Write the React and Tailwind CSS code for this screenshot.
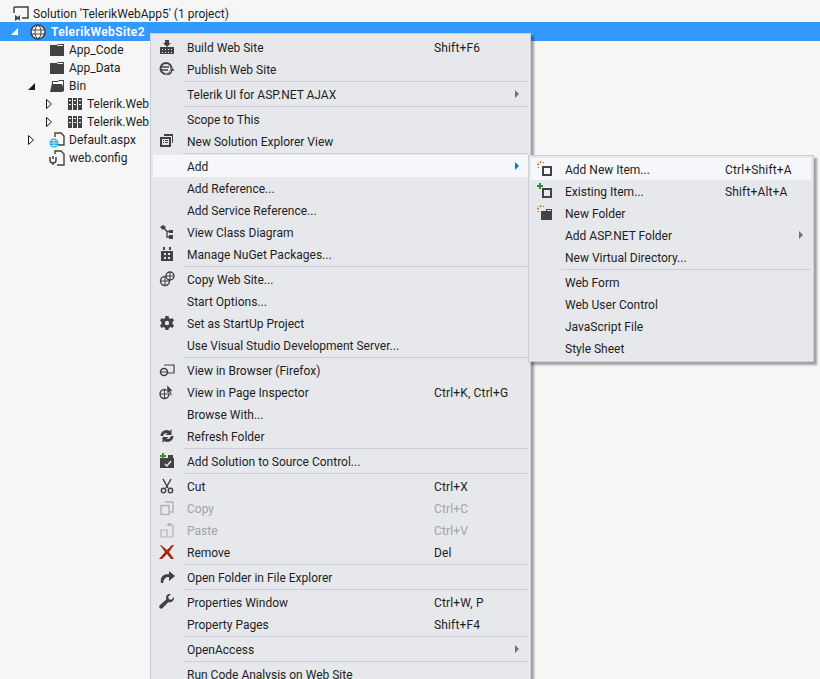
import React from 'react';

const Ic = ({ children, className = '' }) => (
  <svg width="16" height="16" viewBox="0 0 16 16" className={`shrink-0 ${className}`}>{children}</svg>
);

const dark = '#424242';
const bg = '#e7e8ec';

const icons = {
  build: <Ic><path d="M1 8h14v7H1z" fill={dark} /><path d="M6 1h4v3h2l-4 4-4-4h2z" fill={dark} /><path d="M3 10h1v1H3zM6 10h1v1H6zM9 10h1v1H9zM12 10h1v1h-1zM3 13h1v1H3zM6 13h1v1H6zM9 13h1v1H9zM12 13h1v1h-1z" fill={bg} /></Ic>,
  publish: <Ic><circle cx="7" cy="7.500" r="5.500" fill="none" stroke={dark} strokeWidth="2" /><path d="M2 6h8M2 9h7" stroke={dark} strokeWidth="1.300" /><path d="M7 14c3.500 1 6-1 6.500-4H16l-2.500-3.500L10 10h1.800c-.5 1.500-2.300 2.300-4.800 2z" fill={dark} stroke={bg} strokeWidth=".6" /></Ic>,
  newView: <Ic><path d="M5 1h9v9h-1V3H5z" fill={dark} /><path d="M1 4h11v10H1z" fill={dark} /><path d="M3 6h7v6H3z" fill={bg} /><path d="M4 7h1v1H4zM6 7h3v1H6zM4 9h1v1H4zM6 9h3v1H6z" fill={dark} /></Ic>,
  classDiagram: <Ic><path d="M1 3l3-2 3 2-3 3z" fill={dark} /><path d="M10 6h4v3h-4zM10 11h4v4h-4z" fill={dark} /><path d="M5 4l3 3.500h3M8 7.500V13h3" fill="none" stroke={dark} strokeWidth="1.300" /></Ic>,
  nuget: <Ic><path d="M2 5h12v10H2z" fill={dark} /><path d="M4 1h2v3H4zM10 1h2v3h-2z" fill={dark} /><path d="M5 7h2v2H5zM9 7h2v2H9zM5 11h2v2H5zM9 11h2v2H9z" fill={bg} /></Ic>,
  copySite: <Ic><circle cx="6" cy="10" r="4.500" fill="none" stroke={dark} strokeWidth="1.400" /><path d="M6 5.500v9M1.500 10h9" stroke={dark} /><circle cx="11" cy="5" r="4" fill={bg} stroke={dark} strokeWidth="1.400" /><path d="M11 1v8M7 5h8" stroke={dark} /></Ic>,
  gear: <Ic><path d="M6.500 1h3l.4 2 1.700.9 1.900-.9 1.500 2.600-1.500 1.300v2.200l1.500 1.300-1.500 2.600-1.900-.9-1.700.9-.4 2h-3l-.4-2-1.700-.9-1.900.9L1 10.400l1.500-1.300V6.900L1 5.600l1.500-2.600 1.900.9 1.700-.9z" fill={dark} /><circle cx="8" cy="8" r="2.200" fill={bg} /></Ic>,
  browser: <Ic><path d="M5 3h10v8H9" fill="none" stroke={dark} strokeWidth="1.200" /><circle cx="5" cy="10" r="3.500" fill="none" stroke={dark} strokeWidth="1.600" /><path d="M2 10h6" stroke={dark} /></Ic>,
  inspector: <Ic><circle cx="5.500" cy="10" r="4.500" fill="none" stroke={dark} strokeWidth="1.400" /><path d="M5.500 5.500v9M1 10h9" stroke={dark} /><path d="M8 1l6 6-2.500.3L13 11l-1.500.6L10 8l-2 1.500z" fill={dark} stroke={bg} strokeWidth=".5" /></Ic>,
  refresh: <Ic><path d="M1.500 8A6 6 0 0 1 10.800 3L12.500 1v6h-6l2-2A3.500 3.500 0 0 0 4.200 8z" fill={dark} /><path d="M14.500 8A6 6 0 0 1 5.200 13L3.500 15V9h6l-2 2a3.500 3.500 0 0 0 4.300-3z" fill={dark} /></Ic>,
  sourceControl: <Ic><path d="M1 5h14v10H1z" fill={dark} /><path d="M9 2h5v3H9z" fill={dark} /><path d="M6 11l2 2 4-5" fill="none" stroke={bg} strokeWidth="1.500" /><path d="M3 0h2v2h2v2H5v2H3V4H1V2h2z" fill="#388a34" /></Ic>,
  cut: <Ic><path d="M4 1l5 9M12 1L7 10" stroke={dark} strokeWidth="1.500" fill="none" /><circle cx="4.500" cy="12.500" r="2.200" fill="none" stroke={dark} strokeWidth="1.400" /><circle cx="11.500" cy="12.500" r="2.200" fill="none" stroke={dark} strokeWidth="1.400" /></Ic>,
  copy: <Ic><path d="M6 2h8v10h-3" fill="none" stroke="#b4b4b4" strokeWidth="1.500" /><path d="M2 5.500h8v9H2z" fill="none" stroke="#b4b4b4" strokeWidth="1.500" /></Ic>,
  paste: <Ic><path d="M7 3h7v12H9" fill="none" stroke="#b4b4b4" strokeWidth="1.200" /><path d="M9 1h3v3H9z" fill="#b4b4b4" /><path d="M2 8h6v7H2z" fill="none" stroke="#b4b4b4" strokeWidth="1.200" /></Ic>,
  remove: <Ic><path d="M2 1l6 5 5-5h2l-5 7 5 7h-3L8 10l-5 5H0l6-7-5-7z" fill="#a1260d" /></Ic>,
  openFolder: <Ic><path d="M2 14c-1-6 2-9 8-9V2l6 5-6 5V8c-3 0-5 1-6 6z" fill={dark} /></Ic>,
  wrench: <Ic><path d="M15 3l-3 3-2-1-1-2 3-3c-3-.5-5 1-5 4l.3 1.500L1 11c-1 1-1 2-.3 3 1 1 2 1 3 0l5.500-5.700C12.500 9 15.500 7 15 3z" fill={dark} /></Ic>,
  addNew: <Ic><path d="M6 6h8v8H6z" fill="none" stroke={dark} strokeWidth="2" /><path d="M3 0h1v2H3zM0 3h2v1H0zM1 1l1 1M6 1h1v1H6zM1 6h1v1H1z" fill="#c27d1a" stroke="#c27d1a" strokeWidth=".4" /></Ic>,
  existing: <Ic><path d="M6 6h8v8H6z" fill="none" stroke={dark} strokeWidth="2" /><path d="M2 0h2v2h2v2H4v2H2V4H0V2h2z" fill="#388a34" /></Ic>,
  newFolder: <Ic><path d="M4 6h11v9H4z" fill={dark} /><path d="M9 4h6v2H9z" fill={dark} /><path d="M10 5h4v1h-4z" fill={bg} /><path d="M3 0h1v2H3zM0 3h2v1H0zM1 1l1 1M6 1h1v1H6zM1 6h1v1H1z" fill="#c27d1a" stroke="#c27d1a" strokeWidth=".4" /></Ic>,
};

const treeIcons = {
  solution: <Ic><path d="M1 1h14v11H9" fill="none" stroke={dark} strokeWidth="1.500" /><path d="M1 1v6" stroke={dark} strokeWidth="1.500" /><path d="M2 9l3 2 2-2v6l-2-2-3 2z" fill={dark} /></Ic>,
  globe: <Ic><circle cx="8" cy="8" r="7" fill="#fff" stroke={dark} strokeWidth="1.500" /><ellipse cx="8" cy="8" rx="3" ry="6.500" fill="none" stroke={dark} /><path d="M1.500 6h13M1.500 10h13" stroke={dark} /></Ic>,
  folder: <Ic><path d="M1 5V3h7l1-1h6v12H1z" fill={dark} /><path d="M2 4h6l1-1h5v1z" fill="#fff" /></Ic>,
  folderOpen: <Ic><path d="M3 5V3h6l1-1h5v11l-2 1H1z" fill={dark} /><path d="M4 4h5l1-1h4v6l-1-3H4z" fill="#fff" /></Ic>,
  refs: <Ic><path d="M1 2h4v12H1zM6 2h4v12H6zM11 2h4v12h-4z" fill={dark} /><path d="M2 4h2v1H2zM7 4h2v1H7zM12 4h2v1h-2zM2 8h2v1H2zM7 8h2v1H7zM12 8h2v1h-2z" fill="#fff" /></Ic>,
  aspx: <Ic><path d="M6 5V1h6l3 3v9H9" fill="none" stroke={dark} strokeWidth="1.400" /><circle cx="5" cy="11" r="4.500" fill="#1ba1e2" /><path d="M5 6.500v9M.5 11h9M1.500 8.500h7M1.500 13.500h7" stroke="#fff" strokeWidth=".7" /></Ic>,
  config: <Ic><path d="M6 4V1h6l3 3v11H8" fill="none" stroke={dark} strokeWidth="1.400" /><path d="M4 6v3M1 7v3a3 3 0 0 0 6 0V7M4 12v3" stroke={dark} strokeWidth="1.500" fill="none" /></Ic>,
};

const Expanded = ({ className = 'border-b-[#1e1e1e]' }) => (
  <div className={`w-0 h-0 border-b-[7px] border-l-[7px] border-l-transparent ${className}`} />
);

const Collapsed = () => (
  <svg width="6" height="10" viewBox="0 0 6 10"><path d="M.5.5L5.500 5 .5 9.500z" fill="#f6f6f6" stroke="#1e1e1e" /></svg>
);

const TreeRow = ({ pad, arrow, icon, label }) => (
  <div className="flex items-center h-[18px]" style={{ paddingLeft: pad }}>
    {arrow && (
      <div className="w-[24px] pr-[8px] flex justify-center shrink-0">
        {arrow === 'open' ? <Expanded /> : <Collapsed />}
      </div>
    )}
    <div className="w-[22px] pl-[2px] shrink-0">{treeIcons[icon]}</div>
    <span className="whitespace-nowrap">{label}</span>
  </div>
);

const mainMenu = [
  [{ icon: 'build', label: 'Build Web Site', key: 'Shift+F6' }, { icon: 'publish', label: 'Publish Web Site' }],
  [{ label: 'Telerik UI for ASP.NET AJAX', sub: true }],
  [{ label: 'Scope to This' }, { icon: 'newView', label: 'New Solution Explorer View' }],
  [
    { label: 'Add', sub: true, active: true },
    { label: 'Add Reference...' },
    { label: 'Add Service Reference...' },
    { icon: 'classDiagram', label: 'View Class Diagram' },
    { icon: 'nuget', label: 'Manage NuGet Packages...' },
  ],
  [
    { icon: 'copySite', label: 'Copy Web Site...' },
    { label: 'Start Options...' },
    { icon: 'gear', label: 'Set as StartUp Project' },
    { label: 'Use Visual Studio Development Server...' },
  ],
  [
    { icon: 'browser', label: 'View in Browser (Firefox)' },
    { icon: 'inspector', label: 'View in Page Inspector', key: 'Ctrl+K, Ctrl+G' },
    { label: 'Browse With...' },
    { icon: 'refresh', label: 'Refresh Folder' },
  ],
  [{ icon: 'sourceControl', label: 'Add Solution to Source Control...' }],
  [
    { icon: 'cut', label: 'Cut', key: 'Ctrl+X' },
    { icon: 'copy', label: 'Copy', key: 'Ctrl+C', disabled: true },
    { icon: 'paste', label: 'Paste', key: 'Ctrl+V', disabled: true },
    { icon: 'remove', label: 'Remove', key: 'Del' },
  ],
  [{ icon: 'openFolder', label: 'Open Folder in File Explorer' }],
  [{ icon: 'wrench', label: 'Properties Window', key: 'Ctrl+W, P' }, { label: 'Property Pages', key: 'Shift+F4' }],
  [{ label: 'OpenAccess', sub: true }],
  [{ label: 'Run Code Analysis on Web Site' }],
];

const subMenu = [
  [
    { icon: 'addNew', label: 'Add New Item...', key: 'Ctrl+Shift+A', active: true },
    { icon: 'existing', label: 'Existing Item...', key: 'Shift+Alt+A' },
    { icon: 'newFolder', label: 'New Folder' },
    { label: 'Add ASP.NET Folder', sub: true },
    { label: 'New Virtual Directory...' },
  ],
  [{ label: 'Web Form' }, { label: 'Web User Control' }, { label: 'JavaScript File' }, { label: 'Style Sheet' }],
];

const MenuItem = ({ item, keyLeft, arrowRight }) => (
  <div className={`relative flex items-center h-[22px] ${item.active ? 'bg-[#f6f7fa]' : ''} ${item.disabled ? 'text-[#a2a4a5]' : ''}`}>
    <div className="w-[6px] shrink-0" />
    {item.icon ? icons[item.icon] : <div className="w-[16px] shrink-0" />}
    <span className="ml-[12px] mt-[2px] whitespace-nowrap">{item.label}</span>
    {item.key && <span className="absolute top-[3px] whitespace-nowrap tracking-[0.15px]" style={{ left: keyLeft }}>{item.key}</span>}
    {item.sub && (
      <div
        className={`absolute w-0 h-0 border-y-[4px] border-y-transparent border-l-[4px] ${item.active ? 'border-l-[#007acc]' : 'border-l-[#717171]'}`}
        style={{ right: arrowRight }}
      />
    )}
  </div>
);

const Menu = ({ groups, keyLeft, arrowRight }) =>
  groups.map((group, i) => (
    <div key={i}>
      {i > 0 && (
        <div className="h-[3px] flex items-center pl-[30px]">
          <div className="h-px w-full bg-[#cccedb]" />
        </div>
      )}
      {group.map((item) => (
        <MenuItem key={item.label} item={item} keyLeft={keyLeft} arrowRight={arrowRight} />
      ))}
    </div>
  ));

export default function App() {
  return (
    <div className="relative w-[820px] h-[679px] overflow-hidden bg-[#f6f6f6] text-[12px] text-[#1e1e1e] font-['Roboto',sans-serif]">
      <div className="pt-[5px]">
        <div className="flex items-center h-[17px] pl-[13px]">
          <div className="w-[20px]">{treeIcons.solution}</div>
          <span>Solution 'TelerikWebApp5' (1 project)</span>
        </div>
        <div className="flex items-center h-[19px] bg-[#3399ff] text-white font-semibold pl-[11px]">
          <div className="w-[19px]"><Expanded className="border-b-white" /></div>
          <div className="w-[21px]">{treeIcons.globe}</div>
          <span className="tracking-[0.4px]">TelerikWebSite2</span>
        </div>
        <TreeRow pad={47} icon="folder" label="App_Code" />
        <TreeRow pad={47} icon="folder" label="App_Data" />
        <TreeRow pad={23} arrow="open" icon="folderOpen" label="Bin" />
        <TreeRow pad={41} arrow="closed" icon="refs" label="Telerik.Web.UI" />
        <TreeRow pad={41} arrow="closed" icon="refs" label="Telerik.Web.UI.Skins" />
        <TreeRow pad={23} arrow="closed" icon="aspx" label="Default.aspx" />
        <TreeRow pad={47} icon="config" label="web.config" />
      </div>

      <div className="absolute left-[150px] top-[33px] w-[381px] border border-[#cccedb] bg-[#e7e8ec] p-[2px] shadow-[3px_3px_2px_rgba(0,0,0,0.35)]">
        <Menu groups={mainMenu} keyLeft={281} arrowRight={9} />
      </div>

      <div className="absolute left-[528px] top-[155px] w-[286px] border border-[#cccedb] bg-[#e7e8ec] p-[2px] shadow-[3px_3px_2px_rgba(0,0,0,0.35)]">
        <Menu groups={subMenu} keyLeft={194} arrowRight={8} />
      </div>
    </div>
  );
}
